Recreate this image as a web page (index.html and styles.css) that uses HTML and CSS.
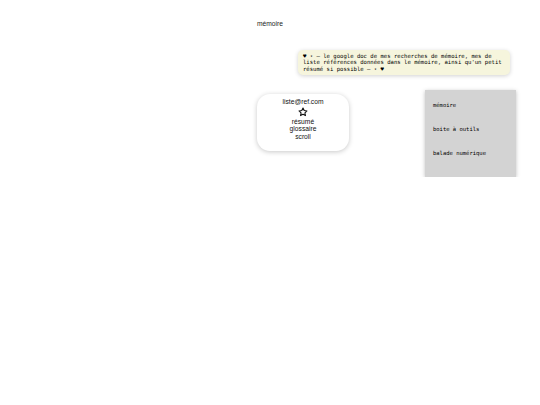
FILE: index.html
```html
<!DOCTYPE html>
<html lang="fr">
<head>
<meta charset="utf-8">
<title>mémoire</title>
<link rel="stylesheet" href="styles.css">
</head>
<body>
<main class="page">
  <h1 class="title">mémoire</h1>
  <p class="note">♥ ⋆ — le google doc de mes recherches de mémoire, mes de liste références données dans le mémoire, ainsi qu'un petit résumé si possible — ⋆ ♥</p>
  <div class="row">
    <div class="card">
      <div class="mail">liste@ref.com</div>
      <svg class="star" viewBox="0 0 24 24" width="10" height="10" aria-hidden="true">
        <path d="M12 2.5l2.9 6.1 6.6.8-4.9 4.6 1.3 6.6L12 17.3l-5.9 3.3 1.3-6.6-4.9-4.6 6.6-.8z" fill="none" stroke="#111" stroke-width="2.6" stroke-linejoin="round"/>
      </svg>
      <div class="links">
        <span>résumé</span>
        <span>glossaire</span>
        <span>scroll</span>
      </div>
    </div>
    <nav class="menu">
      <span>mémoire</span>
      <span>boite à outils</span>
      <span>balade numérique</span>
    </nav>
  </div>
</main>
</body>
</html>
```
FILE: styles.css
```css
html, body {
  margin: 0;
  padding: 0;
  background: #ffffff;
}
.page {
  padding: 20px 0 0 257px;
  font-family: "Liberation Sans", Arial, sans-serif;
  color: #111;
}
.title {
  margin: 0;
  font-size: 6.7px;
  font-weight: normal;
  line-height: 8px;
  color: #222;
}
.note {
  margin: 22px 0 0 41px;
  width: 200px;
  padding: 3px 7px 3px 5px;
  background: #f6f5dd;
  border-radius: 5px;
  box-shadow: 0 1px 4px rgba(0,0,0,0.18);
  font-family: "DejaVu Sans Mono", "Liberation Mono", monospace;
  font-size: 5.6px;
  line-height: 6.4px;
  color: #000;
}
.row {
  display: flex;
  align-items: flex-start;
  margin-top: 15px;
}
.card {
  margin-top: 4px;
  width: 92px;
  height: 57px;
  box-sizing: border-box;
  padding-top: 4px;
  border-radius: 13px;
  background: #fff;
  box-shadow: 0 1px 5px rgba(0,0,0,0.22);
  display: flex;
  flex-direction: column;
  align-items: center;
  font-size: 6.7px;
  line-height: 7.6px;
}
.star {
  display: block;
  margin: 1px 0 1px;
}
.links {
  display: flex;
  flex-direction: column;
  align-items: center;
}
.menu {
  margin-left: 76px;
  width: 91px;
  height: 87px;
  box-sizing: border-box;
  padding: 3px 0 0 8px;
  background: #d3d3d3;
  box-shadow: 0 1px 4px rgba(0,0,0,0.25);
  display: flex;
  flex-direction: column;
  font-family: "DejaVu Sans Mono", "Liberation Mono", monospace;
  font-size: 5.5px;
}
.menu span {
  height: 24px;
  line-height: 24px;
  color: #000;
}
```
